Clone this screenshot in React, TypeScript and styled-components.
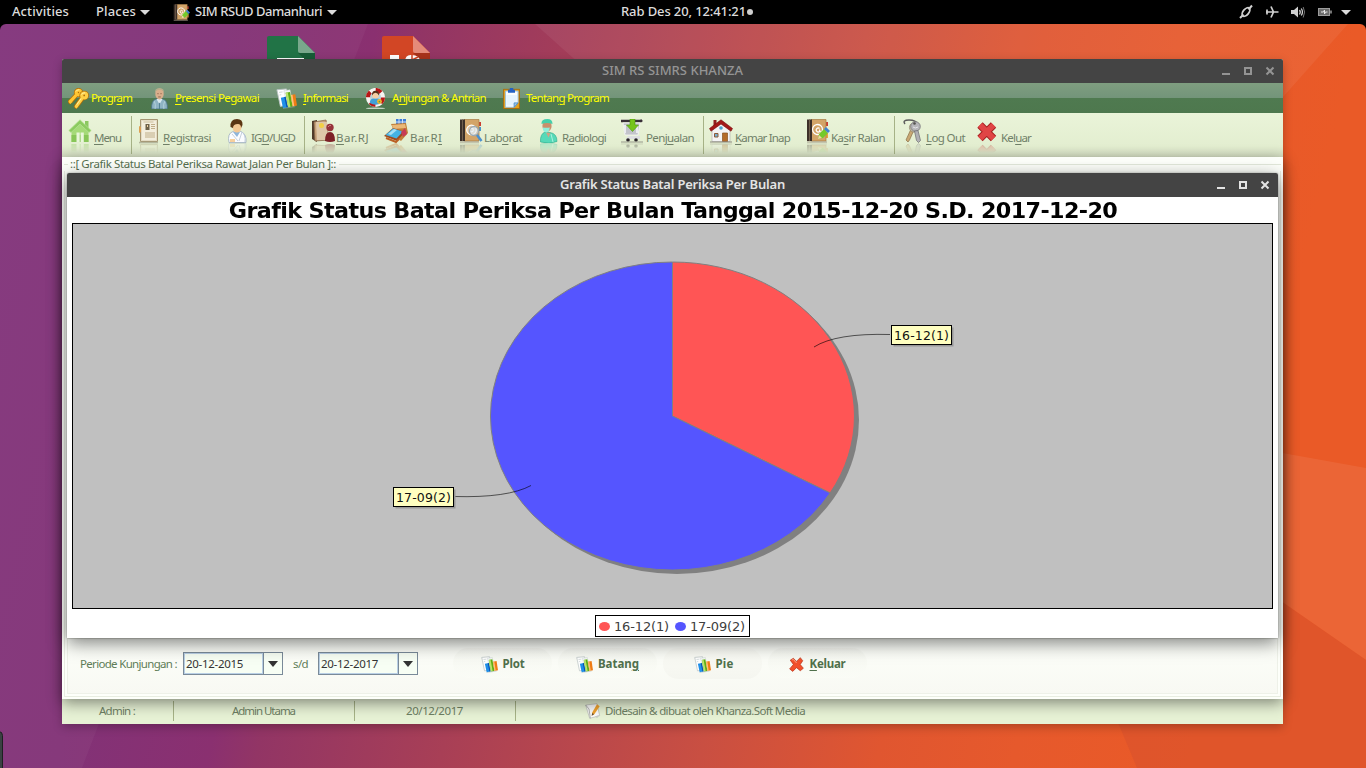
import React, { useLayoutEffect, useRef, useState } from "react";
import styled, { createGlobalStyle } from "styled-components";

const Global = createGlobalStyle`
  * { box-sizing: border-box; }
  html, body { margin: 0; padding: 0; background: #000; overflow: hidden; }
  svg { display: block; flex: none; }
`;

const uiFont = `"Noto Sans", "Open Sans", sans-serif`;
const shellFont = `"Noto Sans", "Open Sans", sans-serif`;
const chartFont = `"DejaVu Sans", sans-serif`;

/* ---------- text ---------- */

const TextSpan = styled.span`
  display: inline-block;
  white-space: pre;
  flex: none;
`;

const Mnemonic = styled.span`
  text-decoration: underline;
  text-decoration-thickness: 1px;
  text-underline-offset: 2px;
`;

/** Text tracked to an exact advance width; "_" marks the mnemonic letter. */
function Label({ text, width }: { text: string; width: number }) {
  const ref = useRef<HTMLSpanElement>(null);
  const [tracking, setTracking] = useState<number | null>(null);
  const at = text.indexOf("_");
  const plain = text.replace("_", "");
  useLayoutEffect(() => {
    if (ref.current && tracking === null) {
      setTracking((width - ref.current.getBoundingClientRect().width) / plain.length);
    }
  }, [tracking, width, plain]);
  return (
    <TextSpan ref={ref} style={tracking === null ? undefined : { letterSpacing: tracking }}>
      {at < 0 ? (
        plain
      ) : (
        <>
          {plain.slice(0, at)}
          <Mnemonic>{plain[at]}</Mnemonic>
          {plain.slice(at + 1)}
        </>
      )}
    </TextSpan>
  );
}

/* ---------- desktop shell ---------- */

const Screen = styled.div`
  width: 1366px;
  height: 768px;
  display: flex;
  flex-direction: column;
  background: #000;
  overflow: hidden;
`;

const TopBar = styled.header`
  height: 24px;
  flex: none;
  display: grid;
  grid-template-columns: 1fr auto 1fr;
  align-items: center;
  color: #dcdcdc;
  font: 500 13px/22px ${shellFont};
  padding: 0 15px 0 12px;
`;

const BarGroup = styled.div<{ $end?: boolean }>`
  display: flex;
  align-items: center;
  height: 24px;
  justify-content: ${(p) => (p.$end ? "flex-end" : "flex-start")};
`;

const BarItem = styled.div<{ $ml?: number; $gap?: number }>`
  height: 24px;
  display: flex;
  align-items: center;
  gap: ${(p) => p.$gap ?? 4}px;
  margin-left: ${(p) => p.$ml ?? 0}px;
  & > ${TextSpan} { height: 24px; }
`;

const Caret = styled.i`
  width: 0;
  height: 0;
  border: 5px solid transparent;
  border-top-color: #dcdcdc;
  border-bottom: 0;
`;

const Dot = styled.i`
  width: 6px;
  height: 6px;
  margin-top: -1px;
  border-radius: 50%;
  background: #cfcfcf;
`;

const Desktop = styled.main`
  position: relative;
  flex: 1;
  overflow: hidden;
  border-radius: 6px 6px 0 0;
`;

const Wallpaper = styled.svg`
  position: absolute;
  inset: 0;
`;

const DesktopFile = styled.div<{ $x: number }>`
  position: absolute;
  left: ${(p) => p.$x}px;
  top: 11px;
`;

const DockHandle = styled.div`
  position: absolute;
  left: -6px;
  bottom: -6px;
  width: 9px;
  height: 43px;
  border-radius: 5px;
  background: #3a4142;
  border: 1px solid #1d2021;
`;

/* ---------- windows ---------- */

const AppWindow = styled.section`
  position: absolute;
  left: 62px;
  top: 35px;
  width: 1221px;
  height: 665px;
  display: flex;
  flex-direction: column;
  border-radius: 2px 2px 0 0;
  background: #e7f2d5;
  box-shadow: 0 3px 10px rgba(0, 0, 0, 0.25);
`;

const TitleBar = styled.div<{ $active?: boolean }>`
  height: 24px;
  flex: none;
  display: grid;
  grid-template-columns: 1fr auto 1fr;
  align-items: center;
  padding: 0 8px;
  border-radius: 2px 2px 0 0;
  background: #444444;
  color: ${(p) => (p.$active ? "#e4e4e4" : "#949494")};
  font: ${(p) => (p.$active ? 600 : 500)} 13px/24px ${shellFont};
`;

const TitleText = styled.div`
  grid-column: 2;
  height: 24px;
  line-height: 23px;
`;

const Controls = styled.div`
  display: flex;
  justify-content: flex-end;
`;

function WindowControls() {
  return (
    <Controls>
      <svg width="54" height="12" viewBox="0 0 54 12" fill="none" stroke="currentColor">
        <path d="M1 9h8" strokeWidth="2" />
        <rect x="24" y="3" width="6" height="6" strokeWidth="2" />
        <path d="M45.500 2.500l7 7M52.500 2.500l-7 7" strokeWidth="2" />
      </svg>
    </Controls>
  );
}

const MenuBar = styled.nav`
  height: 30px;
  flex: none;
  display: flex;
  padding-left: 4px;
  color: #ffff00;
  font: 11.5px/30px ${uiFont};
  background: linear-gradient(#7f9e80 0, #73947a 15px, #4f7a50 15px, #4e784e 30px);
`;

const MenuItem = styled.div<{ $w: number }>`
  width: ${(p) => p.$w}px;
  display: flex;
  align-items: center;
`;

const IconSlot = styled.span<{ $w: number; $pad?: number }>`
  width: ${(p) => p.$w}px;
  padding-left: ${(p) => p.$pad ?? 0}px;
  flex: none;
`;

const ToolBar = styled.div`
  height: 44px;
  flex: none;
  display: flex;
  align-items: flex-start;
  padding: 3px 0 0 4px;
  color: #708068;
  font: 11.5px/18px ${uiFont};
  background: linear-gradient(#eaf4d9, #e3eed0 75%, #d5dfc3);
`;

const Tool = styled.div<{ $w: number }>`
  width: ${(p) => p.$w}px;
  height: 40px;
  display: flex;
  align-items: flex-start;
  padding-top: 3px;
  & > ${TextSpan} { margin-top: 10px; }
  svg { -webkit-box-reflect: below 0 linear-gradient(transparent 58%, rgba(0, 0, 0, 0.35)); }
`;

const ToolRule = styled.i`
  width: 1px;
  height: 38px;
  margin-right: 3px;
  background: #a6b286;
`;

const Form = styled.div`
  position: relative;
  z-index: 1;
  height: 542px;
  flex: none;
  display: flex;
  flex-direction: column;
  padding: 0 2px 2px;
  background: #fdfffa;
  box-shadow: 0 4px 14px rgba(0, 0, 0, 0.45);
`;

const FormTitle = styled.div`
  height: 14px;
  flex: none;
  display: flex;
  align-items: center;
  padding-left: 6px;
  color: #56704f;
  font: 11.5px/14px ${uiFont};
  &::before { content: ""; position: absolute; left: 2px; top: 7px; width: 4px; height: 1px; background: #e2e8da; }
  &::after { content: ""; flex: 1; height: 1px; margin-left: 3px; background: #e2e8da; }
`;

const FormBody = styled.div`
  flex: 1;
  display: flex;
  flex-direction: column;
  justify-content: flex-end;
  padding: 0 2px 2px;
  border: 1px solid #e8ede1;
  border-top: 0;
`;

const Filter = styled.div`
  height: 56px;
  display: flex;
  align-items: flex-start;
  padding: 13px 0 0 12px;
  border: 1px solid #eef1e8;
  background: linear-gradient(#fdfffa, #f8f9f3);
  color: #5f7d58;
  font: 11.5px/23px ${uiFont};
`;

const DateBox = styled.div<{ $ml: number }>`
  width: 100px;
  height: 23px;
  margin-left: ${(p) => p.$ml}px;
  display: flex;
  border: 1px solid #7a8a99;
  background: #f7fef4;
  color: #333;
`;

const DateValue = styled.div`
  width: 79px;
  padding-left: 1px;
  border: 1px solid #b8cfe5;
  line-height: 19px;
`;

const DropButton = styled.div`
  flex: 1;
  display: flex;
  align-items: center;
  justify-content: center;
  border-left: 1px solid #7a8a99;
  &::after { content: ""; border: 5px solid transparent; border-top: 6px solid #333; border-bottom: 0; }
`;

const Range = styled.div`
  margin-left: 10px;
`;

const Actions = styled.div`
  display: flex;
  gap: 6px;
  margin: -4px 0 0 35px;
`;

const ActionButton = styled.button<{ $flat?: boolean }>`
  width: 99px;
  height: 30px;
  padding: 2px 0 0;
  display: flex;
  align-items: center;
  justify-content: center;
  gap: 5px;
  border: 0;
  border-radius: 15px;
  background: linear-gradient(rgba(236, 238, 230, 0.35), rgba(251, 253, 247, 0.5));
  color: #50704c;
  font: bold 11.5px/24px ${uiFont};
  ${(p) => p.$flat && "height: 31px; padding: 1px 0 0 2px; background: linear-gradient(#fafbf5, #f5f6f0);"}
`;

const StatusBar = styled.footer`
  height: 25px;
  flex: none;
  display: flex;
  color: #6d7f63;
  font: 11.5px/20px ${uiFont};
  padding: 2px 0 3px;
  background: #e7f2d5;
`;

const StatusCell = styled.div<{ $w?: number }>`
  width: ${(p) => (p.$w ? p.$w + "px" : "auto")};
  display: flex;
  align-items: center;
  justify-content: ${(p) => (p.$w ? "center" : "flex-start")};
  border-right: ${(p) => (p.$w ? "1px solid #a6b286" : "0")};
  padding-right: ${(p) => (p.$w ? 1 : 0)}px;
`;

const ChartWindow = styled.section`
  position: absolute;
  z-index: 2;
  left: 67px;
  top: 149px;
  width: 1211px;
  height: 465px;
  display: flex;
  flex-direction: column;
  background: #fff;
  box-shadow: 0 0 2px rgba(0, 0, 0, 0.35), 0 5px 18px rgba(0, 0, 0, 0.5);
  border-radius: 2px 2px 0 0;
`;

const ChartTitle = styled.h1`
  margin: 0;
  padding-left: 1px;
  height: 26px;
  text-align: center;
  color: #000;
  font: bold 21px/28px ${chartFont};
`;

const WideText = styled.span`
  display: inline-block;
  transform: scaleX(1.06);
`;

const Plot = styled.div`
  width: 1201px;
  height: 386px;
  margin-left: 5px;
  border: 1px solid #000;
  background: #c0c0c0;
`;

const Legend = styled.div`
  width: 155px;
  height: 22px;
  margin: 6px 0 0 528px;
  padding: 2px 0 0 3px;
  display: flex;
  align-items: center;
  border: 1px solid #000;
  color: #404040;
  font: 13px/20px ${chartFont};
`;

const Swatch = styled.i<{ $c: string; $ml?: number }>`
  width: 11px;
  height: 9px;
  border-radius: 50%;
  margin: -2px 4px 0 ${(p) => p.$ml ?? 0}px;
  background: ${(p) => p.$c};
`;

/* ---------- icons (24 unit grid) ---------- */

type IconName =
  | "keys" | "person" | "charts" | "help" | "clipboard" | "home" | "register" | "doctor"
  | "folder" | "bed" | "lab" | "radiology" | "cart" | "house" | "cashier" | "keyring"
  | "cross" | "note" | "cancel";

const art: Record<IconName, React.ReactNode> = {
  keys: (
    <g fill="none" strokeLinejoin="round">
      <g stroke="#b0700c" strokeWidth="5.4">
        <circle cx="12" cy="5.200" r="2.600" />
        <path d="M9.500 8L2.500 15.500l1.500 1.500" />
      </g>
      <g stroke="#ffc632" strokeWidth="3.600">
        <circle cx="12" cy="5.200" r="2.600" />
        <path d="M9.500 8L2.500 15.500l1.500 1.500" />
      </g>
      <g stroke="#b0700c" strokeWidth="5.400">
        <circle cx="18.500" cy="8.500" r="2.800" />
        <path d="M16 12L9.500 21l1.500 1" />
      </g>
      <g stroke="#ffd045" strokeWidth="3.600">
        <circle cx="18.500" cy="8.500" r="2.800" />
        <path d="M16 12L9.500 21l1.500 1" />
      </g>
      <path d="M9 4q1.500-2.500 4-2M15.500 7.500q1.500-2.500 4-2M15 12l-5 7" stroke="#fff3b5" />
    </g>
  ),
  person: (
    <g>
      <path d="M3 24q-.5-9 4-11l5-1 5 1q4.500 2 4 11z" fill="#8fb4c4" stroke="#4b7585" />
      <path d="M6 15q2 3 1 9M18 15q-2 3-1 9" stroke="#b8d3dd" fill="none" />
      <path d="M8.500 12.500l3.500 6 3.500-6z" fill="#dcebf0" />
      <path d="M12 17v7" stroke="#4d7c8f" />
      <ellipse cx="12" cy="6.800" rx="4.800" ry="6.200" fill="#d9ae8c" />
      <path d="M6.800 7Q6 0 12 0t5.200 7q-.5-4-2-4.500-3-.8-6.200 0Q7.500 3 6.800 7z" fill="#b8ad8c" />
      <path d="M9.500 6.500h1.500m2 0h1.500M10.500 10.200h3" stroke="#8b6047" />
    </g>
  ),
  charts: (
    <g>
      <path d="M1 2l11-1 3 18-10 2z" fill="#fff" stroke="#b9c4c4" />
      <path d="M9 3l7-1 3 17-6 1z" fill="#f3f6f6" stroke="#c9d1d1" strokeWidth=".6" />
      <path d="M3.500 5l4-.5M4 8l2-.3" stroke="#c8d2d2" />
      <path d="M5.500 11l5.500-1 2.500 12-5.500 1z" fill="#1f8fe8" />
      <path d="M9.500 10.300l1.500-.3 2.500 12-1.500.3z" fill="#0b4fae" />
      <path d="M11 5.500l5-1 3 16.500-5 1z" fill="#5fae14" />
      <path d="M11 5.500l2.500-.4 3 16.500-2.500.4z" fill="#b8e36d" />
      <path d="M17 8l5-1 2 13-5 1z" fill="#f07c14" />
      <path d="M17 8l1.800-.3 2 13-1.800.3z" fill="#ffc27a" />
      <path d="M8 23.300l14-2" stroke="#9fb1b5" opacity=".6" />
    </g>
  ),
  help: (
    <g>
      <ellipse cx="12" cy="23.300" rx="11" ry=".9" fill="#dfe8df" opacity=".8" />
      <circle cx="12" cy="10.800" r="8.600" fill="#b9d3d9" stroke="#f6f4f2" strokeWidth="4.600" />
      <circle cx="12" cy="10.800" r="8.600" fill="none" stroke="#b81616" strokeWidth="4.600" strokeDasharray="6.750 6.750" />
      <path d="M5.500 17q0-5 5-5h3q5 0 5 5-6 4-13 0z" fill="#3fa0d8" />
      <circle cx="12" cy="8.300" r="3.800" fill="#f5cfa4" />
      <path d="M8 8.500q-.5-5.500 4-5.500t4 5.500q-1.500-3-4-3t-4 3z" fill="#55301a" />
      <circle cx="16.500" cy="15.500" r="2.800" fill="#f2b62c" />
      <circle cx="16.500" cy="15.500" r="1" fill="#5c9f4c" />
    </g>
  ),
  clipboard: (
    <g>
      <rect x="3" y="1.500" width="18" height="22" fill="#e7a31b" stroke="#a86a0c" />
      <path d="M5 3.500h14.500v13.500l-4.500 5H5z" fill="#fafdff" stroke="#8dbbe0" />
      <path d="M6 8h12v8l-4 4H6z" fill="#dcefff" opacity=".7" />
      <path d="M19.500 17h-4.500v5z" fill="#9cc6ea" stroke="#4d8bc4" />
      <path d="M8 2h2V0h4v2h2v3.500H8z" fill="#2561c4" />
    </g>
  ),
  home: (
    <g>
      <path d="M17 2h3.500v8H17z" fill="#8cc860" />
      <path d="M3.500 12L12 5l8.500 7v11h-17z" fill="#a5da78" />
      <path d="M12 .8L.8 11.500 3 13.500l9-8.300 9 8.300 2.200-2z" fill="#8cca60" stroke="#b6e294" strokeWidth=".7" />
      <path d="M3.500 16h17v7h-17z" fill="#88c658" />
      <path d="M8.500 23v-9.500h3.200V23zM12.600 23v-9.500h3.200V23z" fill="#e9f6da" />
    </g>
  ),
  register: (
    <g>
      <path d="M3.500.5h17v22h-17z" fill="#e4dcc4" stroke="#a59672" />
      <path d="M5 2h14v19H5z" fill="#f3eedd" />
      <path d="M8.500 5h4v6h-4z" fill="#6d6148" />
      <path d="M10 6h1v2h-1z" fill="#f0d2a4" />
      <path d="M14 5.500h4M14 7.500h4M14 9.500h4M8 14h10M8 16h10M8 18h10" stroke="#c0ae88" />
      <path d="M6.500 3h10" stroke="#cbbd9b" />
      <path d="M2 7l2 1v5l-2 1z" fill="#dca052" />
      <path d="M2 23.300h19" stroke="#a8a88f" />
    </g>
  ),
  doctor: (
    <g>
      <path d="M4 23.500q-2-9 4-11l4-1 4 1q6 3 5 11z" fill="#fbfcff" stroke="#9eafc0" strokeWidth=".8" />
      <path d="M8 13l4 5 3-5z" fill="#8fb5da" />
      <path d="M7 15l6 7M17 13l-3 9" stroke="#c5d0de" />
      <ellipse cx="12" cy="8" rx="4.500" ry="5.500" fill="#f4c893" />
      <path d="M5.500 8Q5 0 12 0q6 0 5.500 6l-1.500 3q0-4-3-4-5 0-5 4z" fill="#5b3512" />
      <path d="M17 13q4 3 3 10" stroke="#bccad9" fill="none" />
      <path d="M5 20h5v3H5z" fill="#f7cf9c" />
    </g>
  ),
  folder: (
    <g>
      <path d="M1 2l5-1v22l-5-3z" fill="#4f3a2a" />
      <path d="M3 3l12-2 3 20-14 1z" fill="#c7a27c" stroke="#8d6b4d" strokeWidth=".8" />
      <path d="M5 3h11l1 18H6z" fill="#dec7a9" />
      <circle cx="10.500" cy="6.500" r="2.500" fill="#f2cf46" />
      <circle cx="19" cy="8.500" r="3.700" fill="#97333a" />
      <path d="M14 22q0-9 5-9t5 9q-5 2-10 0z" fill="#7d2027" />
      <path d="M17 8q1-2 3-1.500" stroke="#cf8186" fill="none" />
    </g>
  ),
  bed: (
    <g>
      <path d="M12 0h10v6H12z" fill="#3c7dd6" />
      <path d="M15 0v6M18.500 0v6M12 3h10" stroke="#cfe1f8" />
      <path d="M7 5l15-1 2 10-7 8-4-3z" fill="#c27f38" />
      <path d="M8 6l13-1 1 4-13 1z" fill="#eab877" />
      <path d="M0 17l9-8 12 4-8 9z" fill="#9c4a20" />
      <path d="M1.500 16L9 9.500l10 3-6.500 7z" fill="#45b3e4" />
      <path d="M4 15l6-5 3 1-6 5z" fill="#a6e0f6" />
      <path d="M17 13l4-4 2 6-4 3z" fill="#c63c56" />
      <path d="M2 19l10 4 3-3" stroke="#bb5f24" fill="none" strokeWidth="2" />
    </g>
  ),
  lab: (
    <g>
      <path d="M20 3h2v4h-2z" fill="#cb3e32" />
      <path d="M20 8h2v4h-2z" fill="#4596cb" />
      <path d="M5 .5h15v21.500H5z" fill="#d3a468" stroke="#a67b42" strokeWidth=".7" />
      <path d="M1 .5h5V22H1z" fill="#3d3029" />
      <path d="M3 .5h1V22H3z" fill="#72604f" />
      <circle cx="12.500" cy="11" r="4.800" fill="#f5eadb" fillOpacity=".5" stroke="#fff" strokeWidth="1.300" />
      <circle cx="12.500" cy="11" r="1.800" fill="none" stroke="#fff" strokeWidth="1.200" />
      <circle cx="15" cy="12" r="4.500" fill="#dbe9f4" fillOpacity=".6" stroke="#9ba8b2" strokeWidth="1.300" />
      <path d="M18 16l4.500 6" stroke="#4a90cf" strokeWidth="2.500" />
      <path d="M1 23h19" stroke="#a49b8b" />
    </g>
  ),
  radiology: (
    <g>
      <path d="M3.500 23q-.5-8 4.500-10l5 .5q7 1 7 9-8 3-16.500.5z" fill="#56d9b8" stroke="#2aa98a" strokeWidth=".6" />
      <path d="M9 13.500l2.500 5 2-4.500z" fill="#cfa184" />
      <ellipse cx="10" cy="7" rx="4.600" ry="5.800" fill="#c98f6c" />
      <path d="M4.500 5Q4 0 10.500 0q5 0 5 5-5.500-2-11 0z" fill="#45cfab" />
      <path d="M5.800 8.500q4 .5 7 0-.5 4.500-3.500 5-3.500-.5-3.500-5z" fill="#8ef0dc" />
      <path d="M14 15l2 8" stroke="#a9f3df" />
    </g>
  ),
  cart: (
    <g>
      <path d="M1 2h20l1-1" stroke="#382f38" strokeWidth="2.500" fill="none" />
      <path d="M3 4h17l-2 12H5z" fill="#c3c4cb" stroke="#f7f7f7" strokeWidth=".8" />
      <path d="M5 6v8M17 6v8" stroke="#ebecef" strokeWidth="2" />
      <path d="M8 17h12v3H6z" fill="#dedfe2" />
      <path d="M10 0h5v6h3.500l-6 6.500-6-6.500H10z" fill="#76c41c" stroke="#4d9810" strokeWidth=".6" />
      <circle cx="8" cy="21" r="1.800" fill="#292429" />
      <circle cx="16" cy="21" r="1.800" fill="#292429" />
      <path d="M1 23h22" stroke="#98998c" />
    </g>
  ),
  house: (
    <g>
      <path d="M4.500 1h3v6h-3z" fill="#912020" />
      <path d="M3 11l9-7 9 7v11.500H3z" fill="#f4f3f5" stroke="#a9a7a7" strokeWidth=".6" />
      <path d="M12 .8L.5 9.500l1.500 2.700L12 5l10 7.200 1.500-2.700z" fill="#a51818" stroke="#760f0f" strokeWidth=".6" />
      <circle cx="12" cy="9" r="1.800" fill="#4ea1cc" />
      <path d="M5.500 14.500h3.500v3.500H5.500z" fill="#77aed0" stroke="#8c5a37" />
      <path d="M13.500 14h5v8.500h-5z" fill="#b46b2a" stroke="#885022" strokeWidth=".7" />
      <path d="M1 23h22" stroke="#8d8980" />
    </g>
  ),
  cashier: (
    <g>
      <path d="M20 3h2v4h-2z" fill="#cb3e32" />
      <path d="M20 14h2v5h-2z" fill="#e3a63a" />
      <path d="M5 .5h15v21.500H5z" fill="#d3a468" stroke="#a67b42" strokeWidth=".7" />
      <path d="M1 .5h5V22H1z" fill="#3d3029" />
      <path d="M3 .5h1V22H3z" fill="#72604f" />
      <path d="M14.500 14.500a5 5 0 1 1 2-4q0 3-2 2.500-1.300-.4-.8-2.500M13.500 9.500a2 2 0 1 0 0 3" fill="none" stroke="#fff" strokeWidth="1.300" />
      <path d="M12 20l1-5 5-5 4 4-5 5z" fill="#73c92a" />
      <path d="M18 10l2-2 4 4-2 2z" fill="#3f83d0" />
      <path d="M12 20l1-4 3 3z" fill="#f0d4a6" />
      <path d="M1 23h20" stroke="#a49b8b" />
    </g>
  ),
  keyring: (
    <g>
      <path d="M4 5Q1 1 8 1q7 0 9 4.300" stroke="#5c5c5c" strokeWidth="1.400" fill="none" />
      <path d="M10 10L5 21l2 2 1.500-2L13 11z" fill="#c9a873" stroke="#8a7048" strokeWidth=".7" />
      <circle cx="13" cy="8.500" r="4.600" fill="#c8bfa8" stroke="#8d846f" strokeWidth=".7" />
      <circle cx="14.500" cy="7.500" r="4.800" fill="#b6b6b9" stroke="#77777a" strokeWidth=".8" />
      <circle cx="13.500" cy="4.500" r="1.300" fill="#54534f" />
      <path d="M13.500 12l3.500-.5 2.500 10-2 2-2-2z" fill="#b0b0b4" stroke="#6c6c70" strokeWidth=".7" />
      <path d="M12 8q2 2 5 0" stroke="#e4e4e7" fill="none" />
    </g>
  ),
  cross: (
    <g>
      <path d="M5 6L18.500 19.500M18.500 6L5 19.500" stroke="#a31f20" strokeWidth="7.600" />
      <path d="M5 6L18.500 19.500M18.500 6L5 19.500" stroke="#e04545" strokeWidth="5.800" />
    </g>
  ),
  note: (
    <g>
      <path d="M1 3l17-2 4 18-15 4z" fill="#fbfbfb" stroke="#b5b8b3" />
      <path d="M1 3l5 6 2 14" fill="none" stroke="#8f938e" />
      <path d="M18 2l4 3-8 12-4 2 1-5z" fill="#f0a22e" />
      <path d="M10 19l1-4 2.500 2z" fill="#5b4b3b" />
      <path d="M15 20l7-2-4 5z" fill="#c9cdc7" />
    </g>
  ),
  cancel: (
    <g>
      <path d="M2 5l5-3 5 5 6-6 4 5-4 6 5 6-5 4-6-5-6 6-5-4 6-7z" fill="#f2502b" stroke="#b22a10" />
      <path d="M5 4.500l2-.5 5 5.500" stroke="#ffa88c" fill="none" strokeWidth="1.500" />
    </g>
  ),
};

function Icon({ name, size = 24 }: { name: IconName; size?: number }) {
  return (
    <svg width={size} height={size} viewBox="0 0 24 24">
      {art[name]}
    </svg>
  );
}

/* ---------- data ---------- */

const menus: { icon: IconName; text: string; w: number; slot: number; pad: number; tw: number }[] = [
  { icon: "keys", text: "Progr_am", w: 81, slot: 25, pad: 2, tw: 41 },
  { icon: "person", text: "_Presensi Pegawai", w: 127, slot: 28, pad: 2, tw: 84 },
  { icon: "charts", text: "_Informasi", w: 89, slot: 29, pad: 2, tw: 45 },
  { icon: "help", text: "A_njungan & Antrian", w: 137, slot: 29, pad: 2, tw: 94 },
  { icon: "clipboard", text: "Tentan_g Program", w: 120, slot: 26, pad: 1, tw: 83 },
];

type ToolSpec = { icon: IconName; text: string; w: number; slot: number; pad: number; tw: number } | "rule";

const tools: ToolSpec[] = [
  { icon: "home", text: "_Menu", w: 65, slot: 28, pad: 2, tw: 27 },
  "rule",
  { icon: "register", text: "_Registrasi", w: 90, slot: 28, pad: 2, tw: 48 },
  { icon: "doctor", text: "IG_D/UGD", w: 79, slot: 26, pad: 0, tw: 44 },
  "rule",
  { icon: "folder", text: "_Bar.RJ", w: 74, slot: 28, pad: 3, tw: 33 },
  { icon: "bed", text: "Bar.R_I", w: 76, slot: 28, pad: 2, tw: 32 },
  { icon: "lab", text: "Lab_orat", w: 77, slot: 26, pad: 1, tw: 38 },
  { icon: "radiology", text: "R_adiologi", w: 84, slot: 27, pad: 2, tw: 44 },
  { icon: "cart", text: "Penj_ualan", w: 84, slot: 27, pad: 1, tw: 48 },
  "rule",
  { icon: "house", text: "_Kamar Inap", w: 98, slot: 28, pad: 2, tw: 55 },
  { icon: "cashier", text: "Ka_sir Ralan", w: 89, slot: 26, pad: 1, tw: 54 },
  "rule",
  { icon: "keyring", text: "_Log Out", w: 76, slot: 28, pad: 3, tw: 39 },
  { icon: "cross", text: "Kel_uar", w: 70, slot: 27, pad: 1, tw: 30 },
];

const slices = [
  { label: "16-12(1)", color: "#ff5555" },
  { label: "17-09(2)", color: "#5555ff" },
];

/* ---------- pictures ---------- */

function Background() {
  return (
    <Wallpaper width="1366" height="744" viewBox="0 24 1366 744">
      <defs>
        <linearGradient id="dusk" gradientUnits="userSpaceOnUse" x1="0" y1="0" x2="1297" y2="298">
          <stop offset="0" stopColor="#82347c" />
          <stop offset=".17" stopColor="#823277" />
          <stop offset=".28" stopColor="#8a3070" />
          <stop offset=".315" stopColor="#923565" />
          <stop offset=".45" stopColor="#a83f56" />
          <stop offset=".64" stopColor="#c94f42" />
          <stop offset=".77" stopColor="#e05630" />
          <stop offset=".87" stopColor="#e6592c" />
          <stop offset="1" stopColor="#ea5a27" />
        </linearGradient>
      </defs>
      <rect y="24" width="1366" height="744" fill="url(#dusk)" />
      <path d="M0 24h368L82 768H0z" fill="#fff" fillOpacity=".035" />
      <path d="M535 24h813L1283 97 900 350z" fill="#fff" fillOpacity=".06" />
      <path d="M1200 438l166 30v192L1200 545z" fill="#fff" fillOpacity=".07" />
      <path d="M1200 545l166 115v108h-229L1050 560z" fill="#d8522d" fillOpacity=".6" />
    </Wallpaper>
  );
}

function OfficeFile({ body, fold, shade, children }: { body: string; fold: string; shade: string; children: React.ReactNode }) {
  return (
    <svg width="48" height="40" viewBox="0 0 48 40">
      <path d="M2 1h29l17 17v22H0V3q0-2 2-2z" fill={body} />
      <path d="M31 18h17v16z" fill={shade} />
      <path d="M31 1l17 17H33q-2 0-2-2z" fill={fold} />
      {children}
    </svg>
  );
}

function StatusIcons() {
  return (
    <svg width="112" height="16" viewBox="0 0 112 16" fill="none" stroke="#d0d0d0">
      <path d="M1 14l3.500-3.500M9.500 5.500l3.500-4" strokeWidth="2" />
      <ellipse cx="7" cy="8" rx="2.800" ry="5" transform="rotate(40 7 8)" strokeWidth="1.800" />
      <path d="M27 8h12.500M32 2.500l2.500 5.500-2.500 5.500M28 5.500v5" strokeWidth="1.700" />
      <path d="M52 6h3l4-3.500v11L55 10h-3z" fill="#d0d0d0" stroke="none" />
      <path d="M60.500 6q1.500 2 0 4.500M62.300 4.500q2.300 3.500 0 7" strokeWidth="1.300" />
      <path d="M64.200 3q2.800 5 0 10.500" stroke="#777" />
      <rect x="79.500" y="4.500" width="11" height="7" fill="#6b6b6b" stroke="#9c9c9c" />
      <path d="M92 6.500v3" stroke="#9c9c9c" strokeWidth="1.500" />
      <path d="M82 8h2.500l1-2v4l1-2h2" stroke="#e8e8e8" />
      <path d="M102 6h10l-5 5z" fill="#dcdcdc" stroke="none" />
    </svg>
  );
}

function Pie() {
  return (
    <svg width="1199" height="384" viewBox="73 224 1199 384">
      <ellipse cx="677" cy="420" rx="182" ry="154" fill="#808080" />
      <path d="M672.500 416V262A182 154 0 0 1 830.100 493z" fill={slices[0].color} stroke="#808080" />
      <path d="M672.500 416L830.100 493A182 154 0 1 1 672.500 262z" fill={slices[1].color} stroke="#808080" />
      <g fill="none" stroke="#000" strokeOpacity=".75" strokeWidth=".8">
        <path d="M814 347Q836 333 890 334.500" />
        <path d="M531 485.500Q508 498 454 496.500" />
      </g>
      <g fontFamily="DejaVu Sans, sans-serif" fontSize="12.500" fill="#111">
        <rect x="893.500" y="327.500" width="60" height="19" fill="#979797" />
        <rect x="891.500" y="325.500" width="60" height="19" fill="#ffffc0" stroke="#000" />
        <text x="894" y="340" textLength="55">{slices[0].label}</text>
        <rect x="395.500" y="489.500" width="60" height="19" fill="#979797" />
        <rect x="393.500" y="487.500" width="60" height="19" fill="#ffffc0" stroke="#000" />
        <text x="396" y="502" textLength="55">{slices[1].label}</text>
      </g>
    </svg>
  );
}

/* ---------- page ---------- */

export default function App() {
  return (
    <Screen>
      <Global />
      <TopBar>
        <BarGroup>
          <BarItem><Label text="Activities" width={57} /></BarItem>
          <BarItem $ml={27}><Label text="Places" width={40} /><Caret /></BarItem>
          <BarItem $ml={23} $gap={5}>
            <Icon name="cashier" size={17} />
            <Label text="SIM RSUD Damanhuri" width={127} />
            <Caret />
          </BarItem>
        </BarGroup>
        <BarItem $ml={11} $gap={1}><Label text="Rab Des 20, 12:41:21" width={125} /><Dot /></BarItem>
        <BarGroup $end><StatusIcons /></BarGroup>
      </TopBar>
      <Desktop>
        <Background />
        <DesktopFile $x={267}>
          <OfficeFile body="#217346" fold="#79a88c" shade="#185c37"><path d="M10 23h27v4H10z" fill="#fff" /></OfficeFile>
        </DesktopFile>
        <DesktopFile $x={382}>
          <OfficeFile body="#d24625" fold="#e58b79" shade="#a8321a">
            <path d="M8 20h9v8H8zM23 27q0-8 7-7 7 0 9 7z" fill="#fff" />
            <path d="M30 19v6l6-3" fill="none" stroke="#d24625" strokeWidth="1.500" />
          </OfficeFile>
        </DesktopFile>
        <DockHandle />

        <AppWindow>
          <TitleBar>
            <TitleText><Label text="SIM RS SIMRS KHANZA" width={141} /></TitleText>
            <WindowControls />
          </TitleBar>
          <MenuBar>
            {menus.map((m) => (
              <MenuItem key={m.text} $w={m.w}>
                <IconSlot $w={m.slot} $pad={m.pad}><Icon name={m.icon} size={21} /></IconSlot>
                <Label text={m.text} width={m.tw} />
              </MenuItem>
            ))}
          </MenuBar>
          <ToolBar>
            {tools.map((t, i) =>
              t === "rule" ? (
                <ToolRule key={i} />
              ) : (
                <Tool key={i} $w={t.w}>
                  <IconSlot $w={t.slot} $pad={t.pad}><Icon name={t.icon} /></IconSlot>
                  <Label text={t.text} width={t.tw} />
                </Tool>
              )
            )}
          </ToolBar>
          <Form>
            <FormTitle>
              <Label text="::[ Grafik Status Batal Periksa Rawat Jalan Per Bulan ]::" width={266} />
            </FormTitle>
            <FormBody>
              <Filter>
                <Label text="Periode Kunjungan :" width={97} />
                <DateBox $ml={6}>
                  <DateValue><Label text="20-12-2015" width={57} /></DateValue>
                  <DropButton />
                </DateBox>
                <Range><Label text="s/d" width={15} /></Range>
                <DateBox $ml={10}>
                  <DateValue><Label text="20-12-2017" width={57} /></DateValue>
                  <DropButton />
                </DateBox>
                <Actions>
                  <ActionButton><Icon name="charts" size={17} /><Label text="Plot" width={22} /></ActionButton>
                  <ActionButton><Icon name="charts" size={17} /><Label text="Batan_g" width={41} /></ActionButton>
                  <ActionButton $flat><Icon name="charts" size={17} /><Label text="Pie" width={18} /></ActionButton>
                  <ActionButton><Icon name="cancel" size={15} /><Label text="_Keluar" width={36} /></ActionButton>
                </Actions>
              </Filter>
            </FormBody>
          </Form>
          <StatusBar>
            <StatusCell $w={112}><Label text="Admin :" width={36} /></StatusCell>
            <StatusCell $w={181}><Label text="Admin Utama" width={63} /></StatusCell>
            <StatusCell $w={161}><Label text="20/12/2017" width={57} /></StatusCell>
            <StatusCell>
              <IconSlot $w={89} $pad={69}><Icon name="note" size={16} /></IconSlot>
              <Label text="Didesain & dibuat oleh Khanza.Soft Media" width={200} />
            </StatusCell>
          </StatusBar>
        </AppWindow>

        <ChartWindow>
          <TitleBar $active>
            <TitleText><Label text="Grafik Status Batal Periksa Per Bulan" width={225} /></TitleText>
            <WindowControls />
          </TitleBar>
          <ChartTitle>
            <WideText>
              <Label text="Grafik Status Batal Periksa Per Bulan Tanggal 2015-12-20 S.D. 2017-12-20" width={890} />
            </WideText>
          </ChartTitle>
          <Plot><Pie /></Plot>
          <Legend>
            <Swatch $c={slices[0].color} />
            <Label text={slices[0].label} width={55} />
            <Swatch $c={slices[1].color} $ml={6} />
            <Label text={slices[1].label} width={55} />
          </Legend>
        </ChartWindow>
      </Desktop>
    </Screen>
  );
}
